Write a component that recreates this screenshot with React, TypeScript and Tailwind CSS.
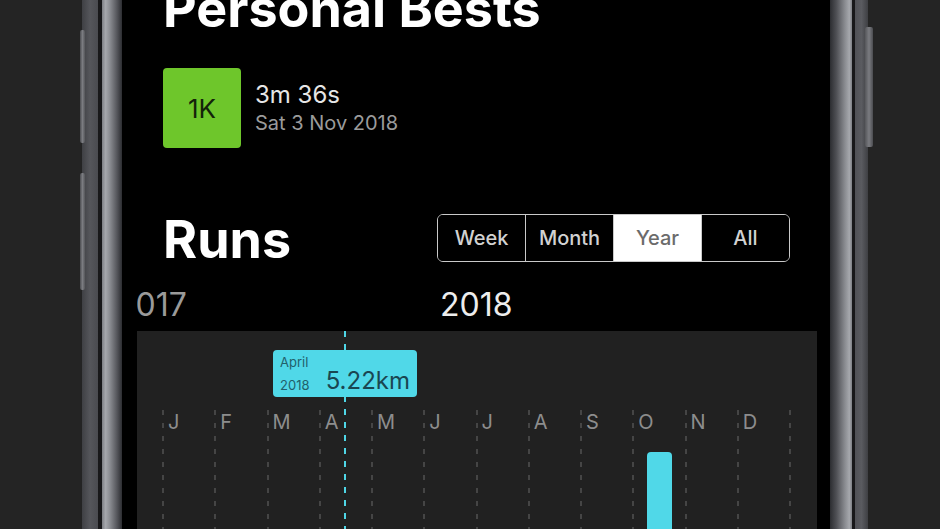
import React from "react";

const months = ["J", "F", "M", "A", "M", "J", "J", "A", "S", "O", "N", "D"];
const segments = ["Week", "Month", "Year", "All"];

function GrayDash() {
  return (
    <div className="w-[2px] shrink-0 self-stretch bg-[image:repeating-linear-gradient(to_bottom,#454545_0px,#454545_5px,transparent_5px,transparent_13px)]" />
  );
}

export default function App() {
  return (
    <div
      className="flex h-[529px] w-[940px] overflow-hidden bg-[#242424]"
      style={{ fontFamily: "Inter, 'Liberation Sans', sans-serif" }}
    >
      <div className="w-[82px] shrink-0" />
      {/* left outer frame with buttons */}
      <div className="flex w-[16px] shrink-0 flex-col bg-[linear-gradient(to_right,#3f4044,#55565b,#4a4b50)]">
        <div className="ml-[-2px] mt-[30px] h-[113px] w-[5px] shrink-0 rounded-[2px] bg-[linear-gradient(to_right,#4b4c50,#7b7c81,#55565a)]" />
        <div className="ml-[-2px] mt-[30px] h-[117px] w-[5px] shrink-0 rounded-[2px] bg-[linear-gradient(to_right,#4b4c50,#7b7c81,#55565a)]" />
      </div>
      <div className="w-[4px] shrink-0 bg-[#18181a]" />
      <div className="w-[20px] shrink-0 bg-[linear-gradient(to_right,#7d7f84,#a6a8ad_18%,#8a8c91_40%,#55565b_75%,#2c2d31)]" />

      {/* screen */}
      <div className="flex h-[529px] w-[708px] shrink-0 flex-col overflow-hidden bg-black">
        <h1 className="-mt-[17px] shrink-0 pl-[41px] text-[52px] font-bold leading-[52px] text-white">
          Personal Bests
        </h1>

        <div className="mt-[33px] flex h-[80px] shrink-0 items-center gap-[14px] pl-[41px]">
          <div className="flex h-[80px] w-[78px] items-center justify-center rounded-[4px] bg-[#6ec62b] text-[26px] text-[#14230a]">
            1K
          </div>
          <div className="flex flex-col">
            <span className="text-[24px] leading-[28px] text-[#e6e6e6]">3m 36s</span>
            <span className="mt-[2px] text-[20px] leading-[24px] text-[#9b9b9b]">Sat 3 Nov 2018</span>
          </div>
        </div>

        <div className="mt-[66px] flex shrink-0 items-start justify-between pl-[41px] pr-[40px]">
          <h2 className="text-[52px] font-bold leading-[52px] text-white">Runs</h2>
          <div className="flex h-[48px] w-[353px] overflow-hidden rounded-[6px] border-[1.5px] border-[#c9c9c9]">
            {segments.map((s, i) => (
              <div
                key={s}
                className={
                  "flex flex-1 items-center justify-center text-[20px] font-medium " +
                  (i > 0 ? "border-l-[1.5px] border-[#c9c9c9] " : "") +
                  (s === "Year" ? "bg-white text-[#6b6b6b]" : "bg-black text-[#d2d2d2]")
                }
              >
                {s}
              </div>
            ))}
          </div>
        </div>

        <div className="ml-[15px] mr-[13px] mt-[20px] flex h-[38px] shrink-0 overflow-hidden text-[32px] leading-[38px]">
          <span className="-ml-[21px] w-[324px] shrink-0 text-[#9a9a9a]">2017</span>
          <span className="shrink-0 text-[#ededed]">2018</span>
        </div>

        <div className="relative ml-[15px] mr-[13px] mt-[7px] min-h-0 flex-1 overflow-hidden bg-[#212121] pl-[25px] pt-[79px]">
          <div className="flex h-[300px]">
            {months.map((m, i) => (
              <div key={i} className="flex w-[52.25px] shrink-0">
                <GrayDash />
                <div className="flex flex-1 flex-col">
                  <span className="ml-[4px] text-[20px] leading-[24px] text-[#8d8d8d]">{m}</span>
                  {i === 9 && (
                    <div className="mx-auto mt-[18px] h-[200px] w-[25px] rounded-t-[4px] bg-[#50d8e8]" />
                  )}
                </div>
              </div>
            ))}
            <GrayDash />
          </div>

          {/* selection indicator */}
          <div className="absolute bottom-0 left-[207px] top-0 w-[2px] bg-[image:repeating-linear-gradient(to_bottom,#4fd6e6_0px,#4fd6e6_6px,transparent_6px,transparent_13px)]" />

          {/* tooltip */}
          <div className="absolute left-[136px] top-[19px] flex h-[47px] w-[144px] items-end justify-between rounded-[4px] bg-[#50d8e8] px-[7px] pb-[4px]">
            <div className="flex flex-col gap-[7px] text-[13px] leading-[16px] text-[#22606b]">
              <span>April</span>
              <span>2018</span>
            </div>
            <span className="text-[24px] leading-[24px] text-[#1a4651]">5.22km</span>
          </div>
        </div>
      </div>

      {/* right frame */}
      <div className="w-[22px] shrink-0 bg-[linear-gradient(to_right,#2c2d31,#505156_30%,#8a8c91_68%,#a6a8ad_88%,#7d7f84)]" />
      <div className="w-[3px] shrink-0 bg-[#18181a]" />
      <div className="w-[13px] shrink-0 bg-[linear-gradient(to_right,#505156,#5a5b60,#3e3f43)]" />
      <div className="flex w-[5px] shrink-0 flex-col">
        <div className="ml-[-3px] mt-[27px] h-[120px] w-[8px] shrink-0 rounded-[2px] bg-[linear-gradient(to_right,#55565a,#7b7c81,#4b4c50)]" />
      </div>
    </div>
  );
}
